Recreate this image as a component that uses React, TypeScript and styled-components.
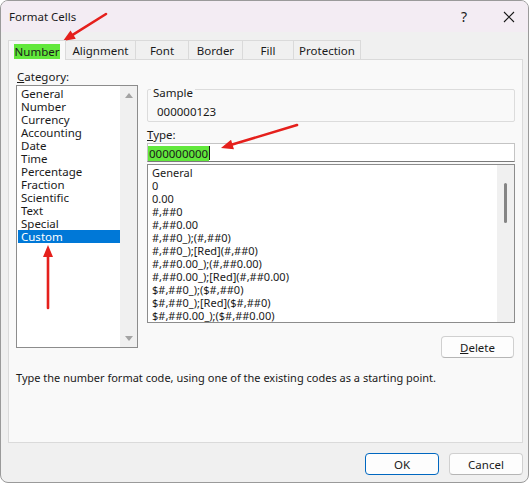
import React from "react";
import styled, { createGlobalStyle } from "styled-components";

const GlobalStyle = createGlobalStyle`
  body {
    margin: 0;
    background: #ffffff;
    font-family: "Noto Sans", "Open Sans", sans-serif;
    font-size: 11px;
    color: #1a1a1a;
  }
`;

const categories = [
  "General",
  "Number",
  "Currency",
  "Accounting",
  "Date",
  "Time",
  "Percentage",
  "Fraction",
  "Scientific",
  "Text",
  "Special",
  "Custom",
];

const formats = [
  "General",
  "0",
  "0.00",
  "#,##0",
  "#,##0.00",
  "#,##0_);(#,##0)",
  "#,##0_);[Red](#,##0)",
  "#,##0.00_);(#,##0.00)",
  "#,##0.00_);[Red](#,##0.00)",
  "$#,##0_);($#,##0)",
  "$#,##0_);[Red]($#,##0)",
  "$#,##0.00_);($#,##0.00)",
];

const tabs = ["Number", "Alignment", "Font", "Border", "Fill", "Protection"];
const tabWidths = [58, 71, 54, 55, 52, 68];

export default function App() {
  return (
    <>
      <GlobalStyle />
      <Window>
        <TitleBar>
          <Title>Format Cells</Title>
          <TitleButtons>
            <HelpMark>?</HelpMark>
            <svg width="12" height="12" viewBox="0 0 12 12">
              <path d="M1 1 L11 11 M11 1 L1 11" stroke="#1a1a1a" strokeWidth="1.1" />
            </svg>
          </TitleButtons>
        </TitleBar>
        <Body>
          <TabStrip>
            {tabs.map((t, i) => (
              <Tab key={t} $active={i === 0} style={{ width: tabWidths[i] }}>
                {i === 0 ? <Highlight>{t}</Highlight> : t}
              </Tab>
            ))}
          </TabStrip>
          <Panel>
            <Columns>
              <LeftColumn>
                <Label>
                  <u>C</u>ategory:
                </Label>
                <CategoryList>
                  <Items>
                    {categories.map((c) => (
                      <CategoryItem key={c} $selected={c === "Custom"}>
                        {c}
                      </CategoryItem>
                    ))}
                  </Items>
                  <ScrollTrack>
                    <ArrowGlyph viewBox="0 0 8 5">
                      <path d="M0 5 L4 0 L8 5 Z" fill="#a3a3a3" />
                    </ArrowGlyph>
                    <ArrowGlyph viewBox="0 0 8 5">
                      <path d="M0 0 L4 5 L8 0 Z" fill="#a3a3a3" />
                    </ArrowGlyph>
                  </ScrollTrack>
                </CategoryList>
              </LeftColumn>
              <RightColumn>
                <GroupBox>
                  <Legend>Sample</Legend>
                  <SampleValue>000000123</SampleValue>
                </GroupBox>
                <TypeLabel>
                  <u>T</u>ype:
                </TypeLabel>
                <TypeInput>
                  <Highlight>000000000</Highlight>
                  <Caret />
                </TypeInput>
                <FormatList>
                  <Items>
                    {formats.map((f) => (
                      <FormatItem key={f}>{f}</FormatItem>
                    ))}
                  </Items>
                  <ThinTrack>
                    <Thumb />
                  </ThinTrack>
                </FormatList>
                <DeleteRow>
                  <Button $width={73}>
                    <u>D</u>elete
                  </Button>
                </DeleteRow>
              </RightColumn>
            </Columns>
            <HelpText>
              Type the number format code, using one of the existing codes as a starting point.
            </HelpText>
          </Panel>
          <Footer>
            <Button $width={74} $primary>
              OK
            </Button>
            <Button $width={74}>Cancel</Button>
          </Footer>
        </Body>
        <Annotations width="529" height="483" viewBox="0 0 529 483">
          <RedArrow x1={106} y1={14} x2={63} y2={41} />
          <RedArrow x1={297} y1={125} x2={221} y2={148} />
          <RedArrow x1={48} y1={308} x2={48} y2={245} />
        </Annotations>
      </Window>
    </>
  );
}

function RedArrow({ x1, y1, x2, y2 }: { x1: number; y1: number; x2: number; y2: number }) {
  const dx = x2 - x1;
  const dy = y2 - y1;
  const len = Math.sqrt(dx * dx + dy * dy);
  const ux = dx / len;
  const uy = dy / len;
  const head = 12;
  const half = 5;
  const bx = x2 - ux * head;
  const by = y2 - uy * head;
  const px = -uy * half;
  const py = ux * half;
  return (
    <g>
      <line x1={x1} y1={y1} x2={bx + ux * 2} y2={by + uy * 2} stroke="#e5201c" strokeWidth="2.6" strokeLinecap="round" />
      <polygon
        points={`${x2},${y2} ${bx + px},${by + py} ${bx - px},${by - py}`}
        fill="#e5201c"
      />
    </g>
  );
}

const Window = styled.div`
  position: relative;
  width: 527px;
  height: 481px;
  background: #f0f0f0;
  border: 1px solid #9a9a9a;
  border-radius: 8px;
  overflow: hidden;
  display: flex;
  flex-direction: column;
`;

const TitleBar = styled.div`
  height: 31px;
  flex: none;
  background: #f3ecf3;
  display: flex;
  align-items: center;
  justify-content: space-between;
  padding: 0 13px 0 8px;
`;

const Title = styled.span`
  font-size: 11.5px;
  color: #1a1a1a;
`;

const TitleButtons = styled.div`
  display: flex;
  align-items: center;
  gap: 36px;
`;

const HelpMark = styled.span`
  font-size: 14px;
  color: #1a1a1a;
`;

const Body = styled.div`
  flex: 1;
  display: flex;
  flex-direction: column;
  padding: 8px 5px 0 7px;
`;

const TabStrip = styled.div`
  display: flex;
  height: 19px;
  padding-left: 1px;
`;

const Tab = styled.div<{ $active?: boolean }>`
  box-sizing: border-box;
  height: ${({ $active }) => ($active ? "20px" : "19px")};
  display: flex;
  align-items: center;
  justify-content: center;
  padding-top: 1px;
  background: ${({ $active }) => ($active ? "#f9f9f9" : "#f0f0f0")};
  border: 1px solid #dadada;
  border-bottom: none;
  margin-left: -1px;
  position: relative;
  z-index: ${({ $active }) => ($active ? 1 : 0)};
  font-size: 11.5px;
  color: #1a1a1a;
`;

const Highlight = styled.span`
  background: #62e83c;
  padding: 0 1px;
`;

const Panel = styled.div`
  box-sizing: border-box;
  width: 515px;
  height: 384px;
  background: #f9f9f9;
  border: 1px solid #dadada;
  padding: 9px 7px 0 7px;
  display: flex;
  flex-direction: column;
`;

const Columns = styled.div`
  display: grid;
  grid-template-columns: 122px 368px;
  column-gap: 9px;
`;

const LeftColumn = styled.div`
  display: flex;
  flex-direction: column;
`;

const RightColumn = styled.div`
  display: flex;
  flex-direction: column;
`;

const Label = styled.div`
  height: 16px;
  line-height: 16px;
  font-size: 11.5px;
  padding-left: 1px;
`;

const CategoryList = styled.div`
  box-sizing: border-box;
  height: 263px;
  background: #ffffff;
  border: 1px solid #8c8c8c;
  display: flex;
  padding: 1px 0 0 1px;
`;

const Items = styled.div`
  flex: 1;
  display: flex;
  flex-direction: column;
`;

const CategoryItem = styled.div<{ $selected?: boolean }>`
  height: 13px;
  line-height: 13px;
  padding-left: 3px;
  font-size: 11.5px;
  background: ${({ $selected }) => ($selected ? "#0078d7" : "transparent")};
  color: ${({ $selected }) => ($selected ? "#ffffff" : "#1a1a1a")};
`;

const ScrollTrack = styled.div`
  width: 17px;
  margin-top: -1px;
  background: #f0f0f0;
  display: flex;
  flex-direction: column;
  justify-content: space-between;
  align-items: center;
  padding: 7px 0 6px;
`;

const ArrowGlyph = styled.svg`
  width: 8px;
  height: 5px;
`;

const GroupBox = styled.fieldset`
  margin: 8px 0 0;
  padding: 0 0 1px 9px;
  border: 1px solid #dcdcdc;
  border-radius: 2px;
  min-width: 0;
`;

const Legend = styled.legend`
  padding: 8px 2px 0;
  margin-left: -6px;
  height: 16px;
  line-height: 16px;
  box-sizing: content-box;
  font-size: 11.5px;
`;

const SampleValue = styled.div`
  margin-top: 3px;
  height: 16px;
  line-height: 16px;
  font-size: 11.5px;
`;

const TypeLabel = styled(Label)`
  margin-top: 5px;
  padding-left: 0;
`;

const TypeInput = styled.div`
  box-sizing: border-box;
  height: 19px;
  background: #ffffff;
  border: 1px solid #c4c4c4;
  border-bottom: 1px solid #7a7a7a;
  display: flex;
  align-items: flex-end;
  font-size: 11.5px;
  line-height: 15px;
`;

const Caret = styled.span`
  width: 1px;
  height: 14px;
  background: #1a1a1a;
  margin-bottom: 1px;
`;

const FormatList = styled.div`
  box-sizing: border-box;
  margin-top: 2px;
  height: 159px;
  background: #ffffff;
  border: 1px solid #8c8c8c;
  display: flex;
  padding: 1px 0 0 4px;
  overflow: hidden;
`;

const FormatItem = styled.div`
  height: 13px;
  line-height: 13px;
  font-size: 11px;
  white-space: nowrap;
`;

const ThinTrack = styled.div`
  width: 17px;
  margin-top: -1px;
  background: #f0f0f0;
  display: flex;
  justify-content: center;
  padding-top: 18px;
`;

const Thumb = styled.div`
  width: 3px;
  height: 40px;
  border-radius: 2px;
  background: #858585;
`;

const DeleteRow = styled.div`
  display: flex;
  justify-content: flex-end;
  margin-top: 13px;
  padding-right: 1px;
`;

const Button = styled.div<{ $width: number; $primary?: boolean }>`
  box-sizing: border-box;
  width: ${({ $width }) => $width}px;
  height: 22px;
  background: #fdfdfd;
  border: 1px solid ${({ $primary }) => ($primary ? "#0067c0" : "#d0d0d0")};
  border-bottom-color: ${({ $primary }) => ($primary ? "#0067c0" : "#b5b5b5")};
  border-radius: 4px;
  display: flex;
  align-items: center;
  justify-content: center;
  font-size: 11.5px;
  color: #1a1a1a;
`;

const HelpText = styled.div`
  margin-top: 12px;
  font-size: 11px;
  line-height: 16px;
`;

const Footer = styled.div`
  display: flex;
  justify-content: flex-end;
  gap: 10px;
  margin-top: 10px;
  padding-right: 0;
`;

const Annotations = styled.svg`
  position: absolute;
  left: -1px;
  top: -1px;
  pointer-events: none;
`;
